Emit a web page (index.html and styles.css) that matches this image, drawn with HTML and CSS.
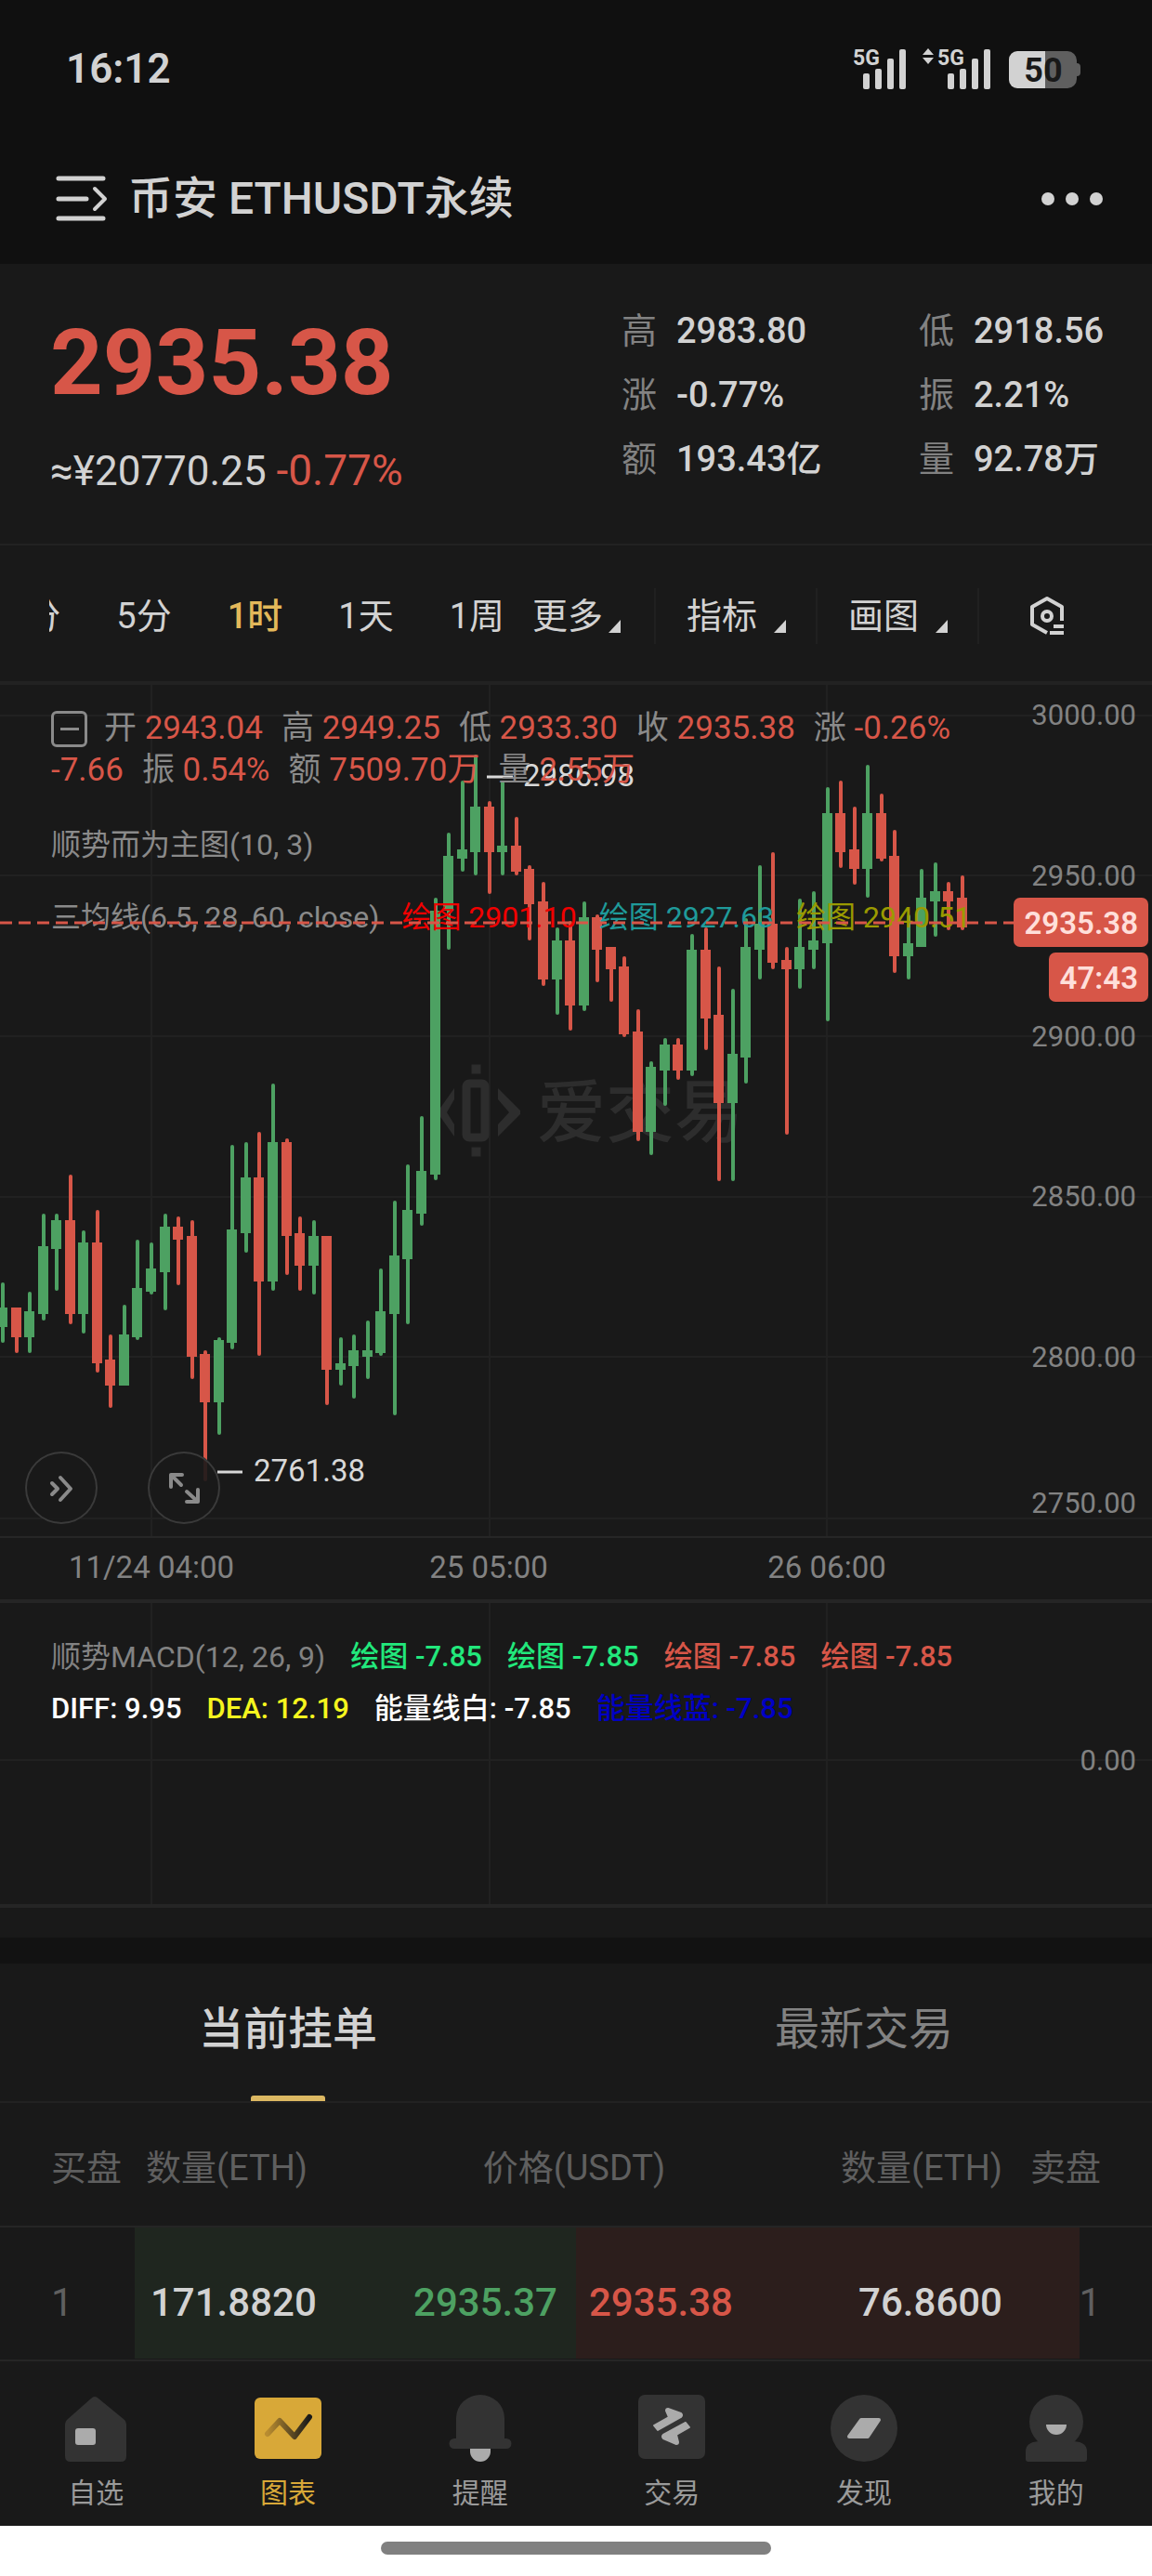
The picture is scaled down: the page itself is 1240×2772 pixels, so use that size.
FILE: index.html
```html
<!DOCTYPE html>
<html lang="zh-CN">
<head>
  <meta charset="UTF-8">
  <title>币安 ETHUSDT永续</title>
  <meta name="viewport" content="width=device-width, initial-scale=1.0">
  <link rel="stylesheet" href="styles.css">
</head>
<body>
  <header class="top">
    <div class="status">
      <span class="clock">16:12</span>
      <svg class="status-icons" width="248" height="48" viewBox="0 0 248 48">
        <g fill="#d2d2d2">
          <text class="net" x="1" y="20">5G</text>
          <rect x="12" y="29" width="7" height="17" rx="2"/>
          <rect x="25" y="24" width="7" height="22" rx="2"/>
          <rect x="38" y="13" width="7" height="33" rx="2"/>
          <rect x="51" y="3" width="7" height="43" rx="2"/>
          <path d="M76 9l6-7 6 7zM76 12l6 7 6-7z"/>
          <text class="net" x="92" y="20">5G</text>
          <rect x="103" y="29" width="7" height="17" rx="2"/>
          <rect x="116" y="24" width="7" height="22" rx="2"/>
          <rect x="129" y="13" width="7" height="33" rx="2"/>
          <rect x="142" y="3" width="7" height="43" rx="2"/>
        </g>
        <path d="M208 5h24a10 10 0 0 1 10 10v3q4 0 4 4v6q0 4-4 4v3a10 10 0 0 1-10 10h-24z" fill="#5f5f5f"/>
        <path d="M208 5h-30a9 9 0 0 0-9 9v22a9 9 0 0 0 9 9h30z" fill="#d2d2d2"/>
        <text class="battery" x="206" y="38" text-anchor="middle">50</text>
      </svg>
    </div>
    <div class="titlebar">
      <button class="icon-btn" aria-label="菜单">
        <svg width="56" height="50" viewBox="0 0 56 50" fill="none" stroke="#d2d2d2" stroke-width="5" stroke-linecap="round" stroke-linejoin="round">
          <path d="M3 3h48M3 25h30M3 46h48"/>
          <path d="M42 14l11 11-11 11" stroke-width="4"/>
        </svg>
      </button>
      <h1>币安 ETHUSDT永续</h1>
      <button class="icon-btn more-btn" aria-label="更多">
        <svg width="68" height="16" viewBox="0 0 68 16" fill="#d2d2d2">
          <circle cx="8" cy="8" r="7"/><circle cx="34" cy="8" r="7"/><circle cx="60" cy="8" r="7"/>
        </svg>
      </button>
    </div>
  </header>

  <main>
    <section class="quote">
      <div class="quote-main">
        <div class="price">2935.38</div>
        <div class="cny">≈¥20770.25 <span class="red">-0.77%</span></div>
      </div>
      <dl class="stats">
        <div><dt>高</dt><dd>2983.80</dd></div>
        <div><dt>低</dt><dd>2918.56</dd></div>
        <div><dt>涨</dt><dd>-0.77%</dd></div>
        <div><dt>振</dt><dd>2.21%</dd></div>
        <div><dt>额</dt><dd>193.43亿</dd></div>
        <div><dt>量</dt><dd>92.78万</dd></div>
      </dl>
    </section>

    <nav class="toolbar">
      <div class="periods">
        <button>1分</button>
        <button>5分</button>
        <button class="active">1时</button>
        <button>1天</button>
        <button>1周</button>
      </div>
      <button class="drop more">更多</button>
      <button class="drop">指标</button>
      <button class="drop">画图</button>
      <button class="settings" aria-label="设置">
        <svg width="40" height="44" viewBox="0 0 40 44" fill="none" stroke="#d2d2d2" stroke-width="4" stroke-linejoin="round">
          <path d="M19 40L3 31V12L19 3l16 9v15"/>
          <circle cx="19" cy="22" r="5"/>
          <path d="M26 33h11M22 40h15"/>
        </svg>
      </button>
    </nav>

    <section class="chart">
      <svg class="plot" viewBox="0 0 1240 984">
        <g class="grid">
          <path d="M163 0V917M527 0V917M890 0V917"/>
          <path d="M0 33H1240M0 205H1240M0 378H1240M0 551H1240M0 723H1240M0 897H1240"/>
          <path class="axis" d="M0 917H1240"/>
        </g>
        <g class="watermark">
          <path d="M489 434v12l-8 14 8 13v13l-17-24v-4zM536 434v12l12 14-12 13v13l24-24v-4z" stroke="none"/>
          <rect x="502" y="429" width="20" height="58" rx="3" fill="none" stroke-width="9"/>
          <rect x="508" y="409" width="9" height="9"/>
          <rect x="508" y="498" width="9" height="9"/>
          <text x="578" y="486">爱交易</text>
        </g>
        <g id="candles"></g>
        <g class="extreme">
          <path d="M524 99h28M234 847h27"/>
          <text x="563" y="109">2986.98</text>
          <text x="273" y="857">2761.38</text>
        </g>
        <g class="tick" text-anchor="end">
          <text x="1223" y="43">3000.00</text>
          <text x="1223" y="216">2950.00</text>
          <text x="1223" y="389">2900.00</text>
          <text x="1223" y="561">2850.00</text>
          <text x="1223" y="734">2800.00</text>
          <text x="1223" y="891">2750.00</text>
        </g>
        <g class="time" text-anchor="middle">
          <text x="163" y="961">11/24 04:00</text>
          <text x="526" y="961">25 05:00</text>
          <text x="890" y="961">26 06:00</text>
        </g>
      </svg>

      <div class="legend">
        <div class="ohlc">
          <button class="fold" aria-label="收起"></button>
          <span>开 <b>2943.04</b></span>
          <span>高 <b>2949.25</b></span>
          <span>低 <b>2933.30</b></span>
          <span>收 <b>2935.38</b></span>
          <span>涨 <b>-0.26%</b></span>
        </div>
        <div class="ohlc">
          <b>-7.66</b>
          <span>振 <b>0.54%</b></span>
          <span>额 <b>7509.70万</b></span>
          <span>量 <b>2.55万</b></span>
        </div>
        <div class="indicator">顺势而为主图(10, 3)</div>
        <div class="indicator">
          <span>三均线(6.5, 28, 60, close)</span>
          <span class="ma-fast">绘图 2901.10</span>
          <span class="ma-mid">绘图 2927.63</span>
          <span class="ma-slow">绘图 2940.51</span>
        </div>
      </div>

      <svg class="plot last" viewBox="0 0 1240 984">
        <path class="last-line" d="M0 256H1240"/>
        <rect x="1091" y="229" width="145" height="53" rx="7"/>
        <rect x="1129" y="288" width="107" height="53" rx="7"/>
        <text x="1225" y="268" text-anchor="end">2935.38</text>
        <text x="1225" y="327" text-anchor="end">47:43</text>
      </svg>

      <div class="chart-btns">
        <button aria-label="展开">
          <svg width="78" height="78" viewBox="0 0 78 78"><path d="M29 34l6 6-6 6M38 28l11 12-11 12"/></svg>
        </button>
        <button aria-label="全屏">
          <svg width="78" height="78" viewBox="0 0 78 78"><path d="M37 25H25v13M25 25l11 11M42 54h12V41M54 54L42 43"/></svg>
        </button>
      </div>
    </section>

    <section class="macd">
      <svg class="plot" viewBox="0 0 1240 324">
        <g class="grid"><path d="M163 0V324M527 0V324M890 0V324M0 169H1240"/></g>
        <g class="tick"><text x="1223" y="180" text-anchor="end">0.00</text></g>
      </svg>
      <div class="macd-legend">
        <div>
          <span class="name">顺势MACD(12, 26, 9)</span>
          <span class="up">绘图 -7.85</span>
          <span class="up">绘图 -7.85</span>
          <span class="down">绘图 -7.85</span>
          <span class="down">绘图 -7.85</span>
        </div>
        <div>
          <span class="diff">DIFF: 9.95</span>
          <span class="dea">DEA: 12.19</span>
          <span class="diff">能量线白: -7.85</span>
          <span class="blue">能量线蓝: -7.85</span>
        </div>
      </div>
    </section>

    <section class="book">
      <div class="tabs">
        <button class="active">当前挂单</button>
        <button>最新交易</button>
      </div>
      <table>
        <colgroup>
          <col class="c-buy"><col><col><col><col><col class="c-sell">
        </colgroup>
        <thead>
          <tr>
            <th>买盘</th>
            <th>数量(ETH)</th>
            <th colspan="2">价格(USDT)</th>
            <th>数量(ETH)</th>
            <th>卖盘</th>
          </tr>
        </thead>
        <tbody>
          <tr>
            <td>
              <i class="depth buy" style="width: 38.3%"></i>
              <i class="depth sell" style="width: 43.7%"></i>
              1
            </td>
            <td>171.8820</td>
            <td class="green">2935.37</td>
            <td class="red">2935.38</td>
            <td>76.8600</td>
            <td>1</td>
          </tr>
        </tbody>
      </table>
    </section>
  </main>

  <nav class="tabbar">
    <a href="#">
      <svg width="72" height="72" viewBox="0 0 72 72">
        <path d="M31 4q4-4 8 0l28 23q2 2 2 5v34q0 6-6 6H9q-6 0-6-6V32q0-3 2-5z" fill="#333"/>
        <rect x="14" y="36" width="22" height="18" rx="3" fill="#ababab"/>
      </svg>
      自选
    </a>
    <a href="#" class="active">
      <svg width="72" height="72" viewBox="0 0 72 72">
        <defs>
          <linearGradient id="trend"><stop offset="0" stop-color="#b98c30"/><stop offset="1" stop-color="#191919"/></linearGradient>
        </defs>
        <rect y="3" width="72" height="66" rx="6" fill="#d8a838"/>
        <path d="M14 42l13-14 16 17 16-21" fill="none" stroke="url(#trend)" stroke-width="6" stroke-linecap="round" stroke-linejoin="round"/>
      </svg>
      图表
    </a>
    <a href="#">
      <svg width="72" height="72" viewBox="0 0 72 72">
        <path d="M10 47V25a26 25 0 0 1 52 0v22h2a5 5 0 0 1 0 11H8a5 5 0 0 1 0-11z" fill="#333"/>
        <path d="M25 58h22v3a11 11 0 0 1-22 0z" fill="#ababab"/>
      </svg>
      提醒
    </a>
    <a href="#">
      <svg width="72" height="72" viewBox="0 0 72 72">
        <rect width="72" height="69" rx="7" fill="#333"/>
        <g fill="#ababab" stroke="#ababab" stroke-width="2" stroke-linejoin="round">
          <path d="M17 33l4 5 25-14q2-2 0-4l-14-5q-2 0-2 2l3 7z"/>
          <path d="M55 35l-4-5-24 13q-2 2 0 4l14 6q2 0 2-2l-2-8z"/>
        </g>
      </svg>
      交易
    </a>
    <a href="#">
      <svg width="72" height="72" viewBox="0 0 72 72">
        <circle cx="36" cy="36" r="36" fill="#333"/>
        <path d="M33 27h19L40 45H20z" fill="#ababab" stroke="#ababab" stroke-width="4" stroke-linejoin="round"/>
      </svg>
      发现
    </a>
    <a href="#">
      <svg width="72" height="72" viewBox="0 0 72 72">
        <circle cx="36" cy="29" r="29" fill="#333"/>
        <path d="M3 69V61q0-10 14-11h38q14 1 14 11v8q0 3-3 3H6q-3 0-3-3z" fill="#333"/>
        <path d="M25 32h22a11 11 0 0 1-22 0z" fill="#ababab"/>
      </svg>
      我的
    </a>
  </nav>
  <div class="home-bar"><span></span></div>

  <script src="chart.js"></script>
</body>
</html>
```

FILE: styles.css
```css
* {
  box-sizing: border-box;
}
body {
  margin: 0;
  background: #191919;
  color: #d2d2d2;
  font-family: Roboto, "Noto Sans CJK SC", sans-serif;
  font-size: 38px;
}
button {
  padding: 0;
  border: 0;
  background: none;
  color: inherit;
  font: inherit;
}
svg {
  display: block;
}
.red {
  color: #d75648;
}

/* header */
.top {
  background: #101010;
  padding: 50px 52px 0 60px;
}
.status {
  display: flex;
  justify-content: space-between;
  align-items: center;
  height: 48px;
  padding: 0 23px 0 11px;
}
.status-icons {
  overflow: visible;
}
.clock {
  font-size: 44px;
  font-weight: 600;
}
.net {
  font-size: 23px;
  font-weight: 700;
}
.battery {
  font-size: 36px;
  font-weight: 700;
  fill: #191919;
}
.titlebar {
  display: flex;
  align-items: center;
  gap: 22px;
  padding: 78px 0 32px;
}
.titlebar h1 {
  margin: 0;
  font-size: 48px;
  font-weight: 500;
  line-height: 76px;
}
.icon-btn {
  flex: none;
}
.more-btn {
  margin-left: auto;
}

/* quote */
.quote {
  display: flex;
  justify-content: space-between;
  padding: 38px 54px 42px;
  border-bottom: 2px solid #222;
}
.price {
  color: #d75648;
  font-size: 99px;
  font-weight: 700;
  line-height: 136px;
}
.cny {
  margin-top: 12px;
  font-size: 44px;
  line-height: 72px;
}
.cny .red {
  font-size: 46px;
}
.stats {
  display: grid;
  grid-template-columns: 320px 197px;
  grid-auto-rows: 69px;
  margin: 0;
  line-height: 69px;
}
.stats div {
  display: flex;
  gap: 21px;
}
.stats dt {
  color: #828282;
}
.stats dd {
  margin: 0;
  font-weight: 500;
}

/* toolbar */
.toolbar {
  display: flex;
  align-items: center;
  height: 150px;
  padding: 6px 0 0 53px;
  border-bottom: 4px solid #222;
  line-height: 60px;
}
.periods {
  display: flex;
  justify-content: flex-end;
  gap: 60px;
  width: 490px;
  overflow: hidden;
}
.periods button {
  flex: none;
}
.toolbar .active {
  color: #e3b85a;
  font-weight: 500;
}
.drop {
  display: flex;
  align-items: flex-end;
  gap: 18px;
  padding: 0 32px 0 33px;
  border-right: 2px solid #202020;
}
.drop::after {
  content: "";
  margin-bottom: 12px;
  border-left: 13px solid transparent;
  border-bottom: 14px solid #d2d2d2;
}
.more {
  gap: 6px;
  padding: 0 36px 0 30px;
}
.settings {
  margin-left: 54px;
}

/* chart */
.chart,
.macd {
  position: relative;
  border-bottom: 4px solid #252525;
}
.plot {
  width: 100%;
  height: auto;
}
.grid {
  stroke: #212121;
  stroke-width: 2;
}
.axis {
  stroke: #262626;
}
.watermark {
  fill: #2d2d2d;
  stroke: #2d2d2d;
}
.watermark text {
  font-size: 74px;
  font-weight: 500;
  stroke: none;
}
.candle-up {
  fill: #4da162;
}
.candle-down {
  fill: #d75648;
}
.extreme {
  fill: #d8d8d8;
  font-size: 33px;
}
.extreme path {
  stroke: #d8d8d8;
  stroke-width: 3;
}
.tick {
  fill: #828282;
  font-size: 31px;
}
.time {
  fill: #828282;
  font-size: 33px;
}
.last {
  position: absolute;
  top: 0;
  left: 0;
  fill: #d75648;
}
.last text {
  fill: #ffdfda;
  font-size: 33px;
  font-weight: 600;
}
.last-line {
  stroke: #d75648;
  stroke-width: 3;
  stroke-dasharray: 13 7;
}
.legend {
  position: absolute;
  top: 24px;
  left: 55px;
  color: #8a8a8a;
}
.ohlc {
  display: flex;
  gap: 20px;
  font-size: 35px;
  line-height: 45px;
}
.ohlc b {
  color: #d75648;
  font-weight: 400;
}
.fold {
  display: flex;
  align-items: center;
  justify-content: center;
  width: 39px;
  height: 39px;
  margin: 4px -2px 0 0;
  border: 3px solid #8a8a8a;
  border-radius: 6px;
}
.fold::before {
  content: "";
  width: 20px;
  height: 3px;
  background: #8a8a8a;
}
.indicator {
  display: flex;
  gap: 24px;
  margin-top: 28px;
  font-size: 32px;
  line-height: 50px;
}
.ohlc + .indicator {
  margin-top: 33px;
}
.ma-fast {
  color: #f00000;
}
.ma-mid {
  color: #1f9a9a;
}
.ma-slow {
  color: #9a9a00;
}
.chart-btns {
  position: absolute;
  left: 27px;
  bottom: 81px;
  display: flex;
  gap: 54px;
}
.chart-btns button {
  border-radius: 50%;
  box-shadow: inset 0 0 0 2px #3a3a3a;
  background: rgba(25, 25, 25, 0.9);
}
.chart-btns path {
  fill: none;
  stroke: #8a8a8a;
  stroke-width: 4;
  stroke-linecap: round;
  stroke-linejoin: round;
}

/* macd */
.macd-legend {
  position: absolute;
  top: 30px;
  left: 55px;
  color: #828282;
  font-size: 31px;
  font-weight: 500;
  line-height: 56px;
}
.macd-legend div {
  display: flex;
  gap: 27px;
}
.macd-legend .name {
  font-size: 32px;
  font-weight: 400;
}
.up {
  color: #22e87c;
}
.down {
  color: #d75648;
}
.diff {
  color: #fff;
}
.dea {
  color: #f5f51e;
}
.blue {
  color: #0000c4;
}

/* order book */
.book {
  margin-top: 32px;
  border-top: 28px solid #121212;
}
.tabs {
  display: flex;
  border-bottom: 2px solid #222;
}
.tabs button {
  flex: 1;
  display: flex;
  flex-direction: column;
  align-items: center;
  height: 148px;
  padding-top: 36px;
  color: #828282;
  font-size: 48px;
  line-height: 70px;
}
.tabs .active {
  color: #d2d2d2;
  font-weight: 500;
}
.tabs .active::after {
  content: "";
  width: 80px;
  height: 6px;
  margin-top: auto;
  border-radius: 3px 3px 0 0;
  background: #dcb862;
}
.book table {
  width: 100%;
  border-collapse: collapse;
  table-layout: fixed;
}
.c-buy {
  width: 157px;
}
.c-sell {
  width: 161px;
}
.book tr {
  position: relative;
  height: 133px;
  border-bottom: 2px solid #252525;
}
.book tbody tr {
  height: 144px;
}
.book th {
  padding: 0;
  color: #5f5f5f;
  font-weight: 400;
  text-align: left;
}
.book th:nth-child(3) {
  text-align: center;
}
.book th:nth-child(4),
.book td:nth-child(3),
.book td:nth-child(5) {
  text-align: right;
}
.book td {
  padding: 18px 0 0 5px;
  font-size: 42px;
  font-weight: 500;
}
.book td:nth-child(3) {
  padding-right: 18px;
}
.book td:nth-child(4) {
  padding-left: 16px;
}
.book td:first-child,
.book td:last-child {
  color: #5f5f5f;
  font-weight: 400;
}
.book tr > :first-child {
  padding-left: 55px;
}
.book tr > :last-child {
  padding-right: 55px;
  text-align: right;
}
.book .green {
  color: #4da162;
}
.depth {
  position: absolute;
  top: 0;
  bottom: 0;
  z-index: -1;
}
.buy {
  right: 50%;
  background: #1f261f;
}
.sell {
  left: 50%;
  background: #2c1e1c;
}

/* bottom navigation */
.tabbar {
  display: flex;
  height: 177px;
  padding-top: 36px;
}
.tabbar a {
  flex: 1;
  display: flex;
  flex-direction: column;
  align-items: center;
  gap: 12px;
  color: #9a9a9a;
  font-size: 30px;
  line-height: 44px;
  text-decoration: none;
}
.tabbar .active {
  color: #d8a838;
}
.home-bar {
  display: flex;
  justify-content: center;
  padding: 17px 0 25px;
  background: #fff;
}
.home-bar span {
  width: 420px;
  height: 14px;
  border-radius: 7px;
  background: #808080;
}
```

FILE: chart.js
```js
// [high, bodyTop, bodyBottom, low, isUp]
const candles = [
  [643, 670, 691, 708, 1], [670, 670, 702, 719, 0], [653, 674, 702, 719, 1],
  [569, 604, 677, 684, 1], [569, 576, 607, 652, 1], [527, 576, 677, 688, 0],
  [587, 600, 677, 698, 1], [565, 600, 730, 740, 0], [699, 726, 754, 778, 0],
  [667, 699, 754, 754, 1], [597, 649, 702, 705, 1], [600, 628, 653, 656, 1],
  [569, 583, 632, 673, 1], [572, 583, 597, 646, 0], [576, 593, 723, 747, 0],
  [716, 720, 772, 857, 0], [702, 705, 772, 807, 1], [495, 586, 708, 715, 1],
  [492, 530, 590, 611, 1], [481, 530, 642, 722, 0], [429, 492, 642, 652, 1],
  [488, 492, 593, 635, 0], [572, 590, 625, 652, 0], [576, 593, 625, 656, 1],
  [593, 593, 737, 775, 0], [702, 730, 737, 754, 1], [699, 716, 733, 768, 1],
  [684, 716, 723, 747, 1], [628, 674, 719, 722, 1], [555, 614, 677, 786, 1],
  [516, 565, 618, 688, 1], [464, 523, 569, 582, 1], [229, 243, 527, 533, 1],
  [159, 184, 243, 285, 1], [103, 177, 187, 201, 1], [75, 131, 180, 205, 1],
  [125, 131, 180, 225, 0], [103, 173, 180, 205, 1], [142, 173, 201, 205, 0],
  [194, 198, 236, 275, 0], [212, 233, 317, 324, 0], [261, 275, 317, 355, 1],
  [254, 275, 345, 372, 0], [233, 250, 345, 351, 1], [247, 250, 285, 320, 0],
  [282, 282, 306, 341, 0], [292, 303, 376, 379, 0], [349, 373, 481, 491, 0],
  [405, 411, 481, 506, 1], [380, 387, 415, 453, 1], [380, 387, 415, 425, 0],
  [268, 285, 415, 421, 1], [261, 285, 359, 393, 0], [303, 355, 450, 534, 0],
  [327, 397, 450, 534, 1], [251, 282, 401, 429, 1], [194, 257, 285, 317, 1],
  [180, 257, 299, 306, 0], [282, 296, 306, 484, 0], [230, 282, 306, 327, 1],
  [222, 275, 285, 306, 1], [110, 138, 278, 362, 1], [103, 138, 180, 197, 0],
  [131, 177, 198, 215, 0], [86, 138, 198, 229, 1], [117, 138, 187, 190, 0],
  [156, 184, 292, 310, 0], [247, 278, 292, 317, 1], [198, 229, 282, 282, 1],
  [191, 222, 233, 271, 1], [212, 222, 233, 264, 0], [205, 229, 261, 264, 0]
];

const lastX = 1036;
const firstX = 3;
const step = (lastX - firstX) / (candles.length - 1);
const layer = document.getElementById('candles');

const addRect = (x, y, width, height, rx, cls) => {
  const rect = document.createElementNS('http://www.w3.org/2000/svg', 'rect');
  rect.setAttribute('x', x);
  rect.setAttribute('y', y);
  rect.setAttribute('width', width);
  rect.setAttribute('height', height);
  rect.setAttribute('rx', rx);
  rect.setAttribute('class', cls);
  layer.appendChild(rect);
};

candles.forEach(([high, top, bottom, low, isUp], i) => {
  const x = Math.round(firstX + i * step);
  const cls = isUp ? 'candle-up' : 'candle-down';
  addRect(x - 2, high, 4, low - high, 2, cls);
  addRect(x - 6, top, 11, bottom - top, 0, cls);
});
```
